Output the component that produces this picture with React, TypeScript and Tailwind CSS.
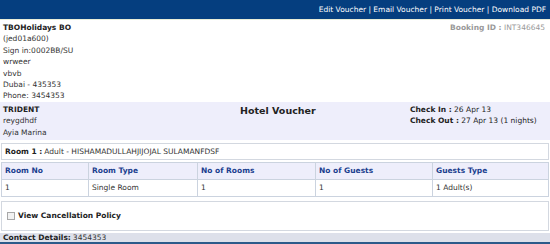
import React from 'react';

const font = "font-['DejaVu_Sans','Liberation_Sans',sans-serif]";

const rows = [
  { no: '1', type: 'Single Room', rooms: '1', guests: '1', gtype: '1 Adult(s)' },
];

const App = () => {
  return (
    <div className={`w-[550px] h-[244px] overflow-hidden bg-white text-[#333] text-[7.5px] ${font}`}>
      <div className="h-[20px] bg-[#053e7f] border-b border-[#e9edd8] flex items-center justify-end pr-[4px] text-white">
        <span>Edit Voucher | Email Voucher | Print Voucher | Download PDF</span>
      </div>

      <div className="flex justify-between px-[3px] pt-[2px] leading-[11.4px]">
        <div>
          <div className="font-bold text-[#222]">TBOHolidays BO</div>
          <div>(jed01a600)</div>
          <div>Sign in:0002BB/SU</div>
          <div>wrweer</div>
          <div>vbvb</div>
          <div>Dubai - 435353</div>
          <div>Phone: 3454353</div>
        </div>
        <div className="text-[#999] pr-[2px]">
          <span className="font-bold">Booking ID :</span> INT346645
        </div>
      </div>

      <div className="bg-[#eeeefb] flex px-[3px] pt-[2px] pb-[2px] leading-[11.4px]">
        <div className="w-[237px]">
          <div className="font-bold text-[#222]">TRIDENT</div>
          <div>reygdhdf</div>
          <div>Ayia Marina</div>
        </div>
        <div className="w-[170px] pt-[1px] text-[9.5px] font-bold text-[#222]">Hotel Voucher</div>
        <div className="text-[#222]">
          <div><span className="font-bold">Check In :</span> 26 Apr 13</div>
          <div><span className="font-bold">Check Out :</span> 27 Apr 13 (1 nights)</div>
        </div>
      </div>

      <div className="mx-[1px] mt-[3px] border border-[#d3d8e0] h-[17px] flex items-center px-[3px]">
        <span className="font-bold text-[#222]">Room 1 :</span>
        <span className="ml-[2px]">Adult - HISHAMADULLAHJIJOJAL SULAMANFDSF</span>
      </div>

      <table className="mx-[1px] mt-[2px] w-[548px] border-collapse">
        <thead>
          <tr className="bg-[#eeeefb] h-[17px] text-left text-[#1b3f8f]">
            <th className="border border-[#cbd3df] px-[3px] w-[87px] font-bold">Room No</th>
            <th className="border border-[#cbd3df] px-[3px] w-[109px] font-bold">Room Type</th>
            <th className="border border-[#cbd3df] px-[3px] w-[118px] font-bold">No of Rooms</th>
            <th className="border border-[#cbd3df] px-[3px] w-[117px] font-bold">No of Guests</th>
            <th className="border border-[#cbd3df] px-[3px] font-bold">Guests Type</th>
          </tr>
        </thead>
        <tbody>
          {rows.map((r) => (
            <tr key={r.no} className="h-[17px]">
              <td className="border border-[#cbd3df] px-[3px]">{r.no}</td>
              <td className="border border-[#cbd3df] px-[3px]">{r.type}</td>
              <td className="border border-[#cbd3df] px-[3px]">{r.rooms}</td>
              <td className="border border-[#cbd3df] px-[3px]">{r.guests}</td>
              <td className="border border-[#cbd3df] px-[3px]">{r.gtype}</td>
            </tr>
          ))}
        </tbody>
      </table>

      <div className="mx-[1px] mt-[4px] h-[30px] border border-[#d3d8e0] flex items-center px-[5px] gap-[3px]">
        <span className="w-[8px] h-[8px] border border-[#a8a8a8] bg-[#f2f2f2]" />
        <span className="font-bold text-[#222]">View Cancellation Policy</span>
      </div>

      <div className="mt-[2px] h-[11px] bg-[#dde0ea] border-b-2 border-[#2c5a8a] flex items-center px-[3px] leading-none">
        <span className="font-bold text-[#222]">Contact Details:</span>
        <span className="ml-[2px]">3454353</span>
      </div>
    </div>
  );
};

export default App;
